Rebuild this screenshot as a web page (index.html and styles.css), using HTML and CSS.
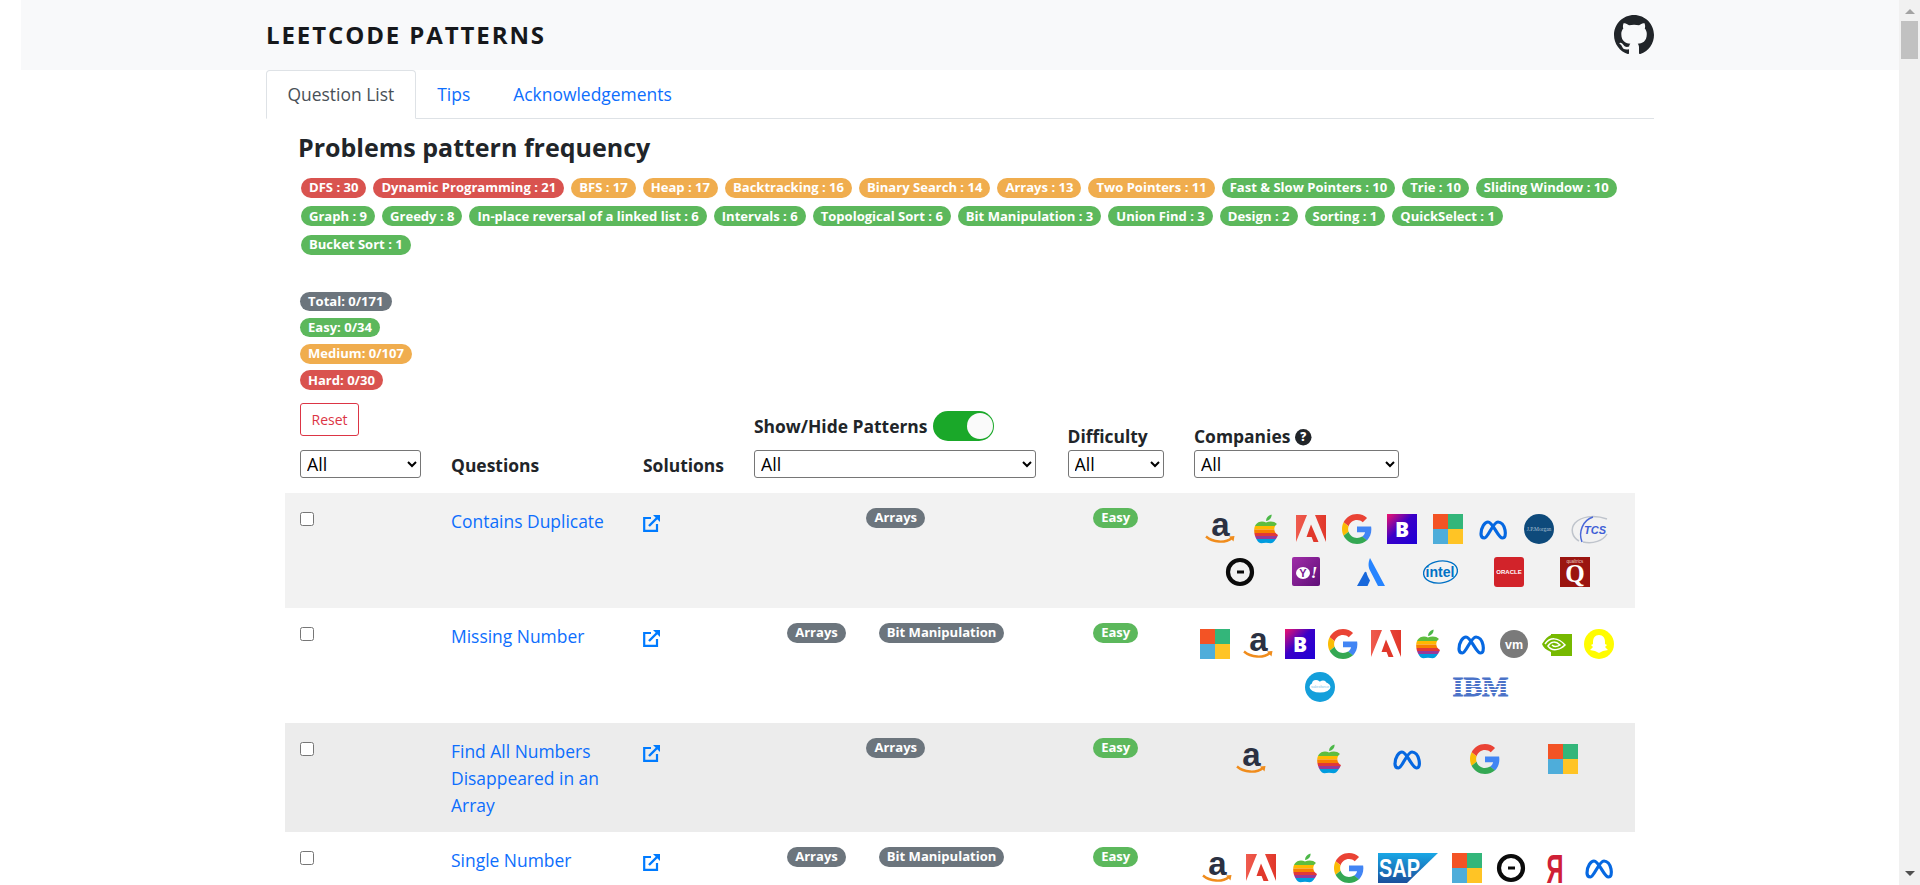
FILE: index.html
```html
<!DOCTYPE html>
<html lang="en">
<head>
<meta charset="utf-8">
<title>Leetcode Patterns</title>
<link rel="stylesheet" href="styles.css">
</head>
<body>
<svg class="sprite" aria-hidden="true">
  <defs>
    <linearGradient id="bookingGrad" x1="0" y1="0" x2="1" y2="1"><stop offset="0" stop-color="#f0146c"/><stop offset=".45" stop-color="#3a00c8"/><stop offset="1" stop-color="#1f00d6"/></linearGradient>
    <linearGradient id="adobeGrad" x1="0" y1="0" x2="1" y2="0"><stop offset="0" stop-color="#ef5b4e"/><stop offset="1" stop-color="#e1382b"/></linearGradient>
    <linearGradient id="sapGrad" x1="0" y1="0" x2="0" y2="1"><stop offset="0" stop-color="#19a8e6"/><stop offset="1" stop-color="#1b4f9c"/></linearGradient>
    <linearGradient id="yahooGrad" x1="0" y1="0" x2="1" y2="1"><stop offset="0" stop-color="#a02ca8"/><stop offset="1" stop-color="#5f0f78"/></linearGradient>
    <clipPath id="appleClip"><path d="M15 8.5C12 6.800 7 7 4.500 11 1.500 16 4 25 8 28.500 10 30 12 28.800 15 28.800 18 28.800 20 30 22 28.500 24.500 26 26 23.500 27 21 22.500 19 22 12.500 26 10 23.500 7 18.500 6.800 15 8.500Z"/></clipPath>
  </defs>
  <symbol id="github" viewBox="0 0 24 24"><path fill="#212529" d="M12 0C5.37 0 0 5.37 0 12c0 5.31 3.435 9.795 8.205 11.385.6.105.825-.255.825-.57 0-.285-.015-1.23-.015-2.235-3.015.555-3.795-.735-4.035-1.41-.135-.345-.72-1.41-1.23-1.695-.42-.225-1.02-.78-.015-.795.945-.015 1.62.87 1.845 1.23 1.08 1.815 2.805 1.305 3.495.99.105-.78.42-1.305.765-1.605-2.67-.3-5.46-1.335-5.46-5.925 0-1.305.465-2.385 1.23-3.225-.12-.3-.54-1.53.12-3.18 0 0 1.005-.315 3.3 1.23.96-.27 1.98-.405 3-.405s2.04.135 3 .405c2.295-1.56 3.3-1.23 3.3-1.23.66 1.65.24 2.88.12 3.18.765.84 1.23 1.905 1.23 3.225 0 4.605-2.805 5.625-5.475 5.925.435.375.81 1.095.81 2.22 0 1.605-.015 2.895-.015 3.3 0 .315.225.69.825.57A12.02 12.02 0 0 0 24 12c0-6.63-5.37-12-12-12z"/></symbol>
  <symbol id="ext" viewBox="0 0 17 17"><path fill="none" stroke="#007bff" stroke-width="2.200" d="M8 3H1.200V15.800H14V9"/><path fill="none" stroke="#007bff" stroke-width="2.400" d="M6 11L14.500 2.500"/><path fill="#007bff" d="M10 0H17V7Z"/></symbol>
  <symbol id="apple" viewBox="0 0 30 30"><path d="M15 7C15 4 17 1.500 20.500 .5 21 3.500 18.500 6.500 15 7Z" fill="#4cb848"/><g clip-path="url(#appleClip)"><rect y="6" width="30" height="6" fill="#5ebd3e"/><rect y="12" width="30" height="3.500" fill="#ffb900"/><rect y="15.500" width="30" height="3.500" fill="#f78200"/><rect y="19" width="30" height="3" fill="#e23838"/><rect y="22" width="30" height="3" fill="#973999"/><rect y="25" width="30" height="5" fill="#009cdf"/></g></symbol>
  <symbol id="adobe" viewBox="0 0 30 30"><path d="M0 1H11L0 28ZM19 1H30V28Z" fill="url(#adobeGrad)"/><path d="M15 10.500L22.500 28H17.500L15.600 23H10.500Z" fill="#e1382b"/></symbol>
  <symbol id="google" viewBox="0 0 48 48"><path fill="#EA4335" d="M24 9.5c3.54 0 6.71 1.22 9.21 3.6l6.85-6.85C35.9 2.38 30.47 0 24 0 14.62 0 6.51 5.38 2.56 13.22l7.98 6.19C12.43 13.72 17.74 9.5 24 9.5z"/><path fill="#4285F4" d="M46.98 24.55c0-1.57-.15-3.09-.38-4.55H24v9.02h12.94c-.58 2.96-2.26 5.48-4.78 7.18l7.73 6c4.51-4.18 7.09-10.36 7.09-17.65z"/><path fill="#FBBC05" d="M10.53 28.59c-.48-1.45-.76-2.99-.76-4.59s.27-3.14.76-4.59l-7.98-6.19C.92 16.46 0 20.12 0 24c0 3.88.92 7.54 2.56 10.78l7.97-6.19z"/><path fill="#34A853" d="M24 48c6.48 0 11.93-2.13 15.89-5.81l-7.73-6c-2.15 1.45-4.92 2.3-8.16 2.3-6.26 0-11.57-4.22-13.47-9.91l-7.98 6.19C6.51 42.62 14.62 48 24 48z"/></symbol>
  <symbol id="microsoft" viewBox="0 0 30 30"><rect width="15" height="15" fill="#f35325"/><rect x="15" width="15" height="15" fill="#33b67a"/><rect y="15" width="15" height="15" fill="#4eadda"/><rect x="15" y="15" width="15" height="15" fill="#ffc425"/></symbol>
  <symbol id="meta" viewBox="0 0 30 30"><path d="M3 20C3 13 7 8 10 8 15 8 20 24 24.500 24 27 24 28 21 27 16 26 11 23 8 20 8 15 8 10 24 6.500 24 4.500 24 3 22.500 3 20Z" fill="none" stroke="#0668e1" stroke-width="3.200"/></symbol>
  <symbol id="uber" viewBox="0 0 30 30"><circle cx="15" cy="15" r="12" fill="none" stroke="#0b0b0b" stroke-width="4.200"/><rect x="12" y="13.500" width="7" height="3" fill="#0b0b0b"/></symbol>
  <symbol id="atlassian" viewBox="0 0 30 30"><path d="M14 1C12 6 12 10 14.500 14.500L22 29H29Z" fill="#2684ff"/><path d="M8.500 15.500L1 29H11.500L14 23.500C12.500 21 11 18 10.500 15.500 10 14.500 9 14.500 8.500 15.500Z" fill="#1868db"/></symbol>
  <symbol id="nvidia" viewBox="0 0 30 30"><path d="M9 5H30V27H9V23C4 21 1 18 0 15 3 10 6 7 9 6Z" fill="#76b900"/><path d="M3 15C8 8 16 8 23 16 18 21 10 23 6 17 9 12 14 12 18 16 15 18 12 18 10 16" fill="none" stroke="#fff" stroke-width="1.500"/></symbol>
  <symbol id="snapchat" viewBox="0 0 30 30"><ellipse cx="15" cy="15" rx="15" ry="15" fill="#fffc00"/><path d="M15 6C19 6 21 9 21 13V15L23 16 21 18 24 21 19 22 15 24 11 22 6 21 9 18 7 16 9 15V13C9 9 11 6 15 6Z" fill="#fff"/></symbol>
</svg>

<nav class="navbar">
  <span class="brand">LEETCODE PATTERNS</span>
  <svg class="github"><use href="#github"/></svg>
</nav>

<main class="page">
  <ul class="tabs">
    <li class="tab active">Question List</li>
    <li class="tab">Tips</li>
    <li class="tab">Acknowledgements</li>
  </ul>

  <section class="summary">
    <h2 class="title">Problems pattern frequency</h2>
    <div class="freq">
      <span class="badge red">DFS : 30</span>
      <span class="badge red">Dynamic Programming : 21</span>
      <span class="badge orange">BFS : 17</span>
      <span class="badge orange">Heap : 17</span>
      <span class="badge orange">Backtracking : 16</span>
      <span class="badge orange">Binary Search : 14</span>
      <span class="badge orange">Arrays : 13</span>
      <span class="badge orange">Two Pointers : 11</span>
      <span class="badge green">Fast &amp; Slow Pointers : 10</span>
      <span class="badge green">Trie : 10</span>
      <span class="badge green">Sliding Window : 10</span>
      <span class="badge green">Graph : 9</span>
      <span class="badge green">Greedy : 8</span>
      <span class="badge green">In-place reversal of a linked list : 6</span>
      <span class="badge green">Intervals : 6</span>
      <span class="badge green">Topological Sort : 6</span>
      <span class="badge green">Bit Manipulation : 3</span>
      <span class="badge green">Union Find : 3</span>
      <span class="badge green">Design : 2</span>
      <span class="badge green">Sorting : 1</span>
      <span class="badge green">QuickSelect : 1</span>
      <span class="badge green">Bucket Sort : 1</span>
    </div>
    <div class="stats">
      <span class="badge grey">Total: 0/171</span>
      <span class="badge green">Easy: 0/34</span>
      <span class="badge orange">Medium: 0/107</span>
      <span class="badge red">Hard: 0/30</span>
    </div>
  </section>

  <table class="problems">
    <colgroup>
      <col class="c-check"><col class="c-question"><col class="c-solution"><col class="c-pattern"><col class="c-difficulty"><col class="c-company">
    </colgroup>
    <thead>
      <tr>
        <th>
          <button class="reset" type="button">Reset</button>
          <select class="filter w-check"><option>All</option></select>
        </th>
        <th class="plain">Questions</th>
        <th class="plain">Solutions</th>
        <th>
          <div class="label-row">Show/Hide Patterns <span class="toggle"><span class="knob"></span></span></div>
          <select class="filter w-pattern"><option>All</option></select>
        </th>
        <th>
          <div class="label-line">Difficulty</div>
          <select class="filter w-difficulty"><option>All</option></select>
        </th>
        <th>
          <div class="label-line">Companies
            <svg class="help" viewBox="0 0 16 16"><circle cx="8" cy="8" r="8" fill="#212529"/><text x="8" y="12" text-anchor="middle" font-family="Open Sans" font-weight="800" font-size="11.500" fill="#fff">?</text></svg>
          </div>
          <select class="filter w-company"><option>All</option></select>
        </th>
      </tr>
    </thead>
    <tbody>
      <tr class="stripe">
        <td class="check"><input type="checkbox"></td>
        <td class="question"><a href="#">Contains Duplicate</a></td>
        <td class="solution"><svg class="ext"><use href="#ext"/></svg></td>
        <td class="tags"><div class="tag-row"><span class="badge grey">Arrays</span></div></td>
        <td class="tags"><div class="tag-row"><span class="badge green">Easy</span></div></td>
        <td class="logos">
          <div class="line line-1a">
            <svg class="logo" viewBox="0 0 30 30"><text x="15.500" y="22" text-anchor="middle" font-family="Liberation Sans" font-weight="700" font-size="33" fill="#2b3142">a</text><path d="M1 22.500C8 28.500 20 29.500 27 24" fill="none" stroke="#f08c1c" stroke-width="2.400"/><path d="M24 22.500L29.500 22 28.500 27.500Z" fill="#f08c1c"/></svg>
            <svg class="logo"><use href="#apple"/></svg>
            <svg class="logo"><use href="#adobe"/></svg>
            <svg class="logo"><use href="#google"/></svg>
            <svg class="logo" viewBox="0 0 30 30"><rect width="30" height="30" fill="url(#bookingGrad)"/><text x="15" y="23" text-anchor="middle" font-family="Open Sans" font-weight="800" font-size="21" fill="#fff">B</text></svg>
            <svg class="logo"><use href="#microsoft"/></svg>
            <svg class="logo"><use href="#meta"/></svg>
            <svg class="logo" viewBox="0 0 30 30"><circle cx="15" cy="15" r="15" fill="#0e4a7b"/><text x="15" y="17" text-anchor="middle" font-family="Liberation Serif" font-size="5.500" fill="#a9c0d4">J.P.Morgan</text></svg>
            <svg class="logo w40" viewBox="0 0 40 30"><path d="M10 27C3 23 1 15 6 9 12 3 24 0 38 5" fill="none" stroke="#bfc4cc" stroke-width="1.500"/><path d="M13 28C9 18 14 6 24 3" fill="none" stroke="#4a68d8" stroke-width="1.500"/><path d="M14 28C24 30 34 27 38 20" fill="none" stroke="#bfc4cc" stroke-width="1.500"/><text x="26" y="20" text-anchor="middle" font-family="Liberation Sans" font-weight="700" font-style="italic" font-size="11" fill="#3f5fd6">TCS</text></svg>
          </div>
          <div class="line line-1b">
            <svg class="logo"><use href="#uber"/></svg>
            <svg class="logo" viewBox="0 0 30 30"><rect x="1" width="28" height="29" rx="2" fill="url(#yahooGrad)"/><ellipse cx="12" cy="16" rx="7" ry="6" fill="#fff"/><text x="12" y="20" text-anchor="middle" font-family="Liberation Sans" font-weight="700" font-size="11" fill="#7b1a92">Y</text><text x="23" y="21" text-anchor="middle" font-family="Liberation Serif" font-style="italic" font-weight="700" font-size="17" fill="#fff">!</text></svg>
            <svg class="logo"><use href="#atlassian"/></svg>
            <svg class="logo w37" viewBox="0 0 37 30"><ellipse cx="18.500" cy="15" rx="17" ry="11" fill="none" stroke="#0071c5" stroke-width="1.400" transform="rotate(-8 18.500 15)"/><text x="18" y="20" text-anchor="middle" font-family="Liberation Sans" font-weight="700" font-size="14" fill="#0071c5">intel</text></svg>
            <svg class="logo" viewBox="0 0 30 30"><rect width="30" height="30" rx="3" fill="#d2232a"/><text x="15" y="17" text-anchor="middle" font-family="Liberation Sans" font-weight="700" font-size="6" fill="#fff">ORACLE</text></svg>
            <svg class="logo" viewBox="0 0 30 30"><rect width="30" height="30" fill="#9b1510"/><text x="15" y="5.500" text-anchor="middle" font-family="Liberation Sans" font-size="4.500" fill="#e6c4c2">qualtrics</text><text x="15" y="25" text-anchor="middle" font-family="Liberation Serif" font-weight="700" font-size="25" fill="#fff">Q</text></svg>
          </div>
        </td>
      </tr>
      <tr>
        <td class="check"><input type="checkbox"></td>
        <td class="question"><a href="#">Missing Number</a></td>
        <td class="solution"><svg class="ext"><use href="#ext"/></svg></td>
        <td class="tags"><div class="tag-row"><span class="badge grey">Arrays</span><span class="badge grey">Bit Manipulation</span></div></td>
        <td class="tags"><div class="tag-row"><span class="badge green">Easy</span></div></td>
        <td class="logos">
          <div class="line line-2a">
            <svg class="logo"><use href="#microsoft"/></svg>
            <svg class="logo" viewBox="0 0 30 30"><text x="15.500" y="22" text-anchor="middle" font-family="Liberation Sans" font-weight="700" font-size="33" fill="#2b3142">a</text><path d="M1 22.500C8 28.500 20 29.500 27 24" fill="none" stroke="#f08c1c" stroke-width="2.400"/><path d="M24 22.500L29.500 22 28.500 27.500Z" fill="#f08c1c"/></svg>
            <svg class="logo" viewBox="0 0 30 30"><rect width="30" height="30" fill="url(#bookingGrad)"/><text x="15" y="23" text-anchor="middle" font-family="Open Sans" font-weight="800" font-size="21" fill="#fff">B</text></svg>
            <svg class="logo"><use href="#google"/></svg>
            <svg class="logo"><use href="#adobe"/></svg>
            <svg class="logo"><use href="#apple"/></svg>
            <svg class="logo"><use href="#meta"/></svg>
            <svg class="logo" viewBox="0 0 30 30"><circle cx="15" cy="15" r="14" fill="#7a7a7a"/><text x="15" y="19.500" text-anchor="middle" font-family="Liberation Sans" font-weight="700" font-size="12.500" fill="#fff">vm</text></svg>
            <svg class="logo"><use href="#nvidia"/></svg>
            <svg class="logo"><use href="#snapchat"/></svg>
          </div>
          <div class="line line-2b">
            <svg class="logo" viewBox="0 0 30 30"><circle cx="15" cy="15" r="15" fill="#149fdb"/><ellipse cx="15" cy="15" rx="10.500" ry="5.500" fill="#fff"/><circle cx="11" cy="12" r="4" fill="#fff"/><circle cx="18" cy="12" r="3.500" fill="#fff"/><text x="15" y="16" text-anchor="middle" font-family="Liberation Sans" font-size="4" fill="#7cc5ea">salesforce</text></svg>
            <svg class="logo w57" viewBox="0 0 57 30"><text x="28.500" y="24" text-anchor="middle" font-family="Liberation Serif" font-weight="700" font-size="27" textLength="56" lengthAdjust="spacingAndGlyphs" fill="#4a72c8" stroke="#4a72c8" stroke-width=".8">IBM</text><g fill="#fff"><rect y="8" width="57" height="1"/><rect y="11" width="57" height="1"/><rect y="14" width="57" height="1"/><rect y="17" width="57" height="1"/><rect y="20" width="57" height="1"/></g></svg>
          </div>
        </td>
      </tr>
      <tr class="stripe-dark">
        <td class="check"><input type="checkbox"></td>
        <td class="question"><a href="#">Find All Numbers Disappeared in an Array</a></td>
        <td class="solution"><svg class="ext"><use href="#ext"/></svg></td>
        <td class="tags"><div class="tag-row"><span class="badge grey">Arrays</span></div></td>
        <td class="tags"><div class="tag-row"><span class="badge green">Easy</span></div></td>
        <td class="logos">
          <div class="line line-3a">
            <svg class="logo" viewBox="0 0 30 30"><text x="15.500" y="22" text-anchor="middle" font-family="Liberation Sans" font-weight="700" font-size="33" fill="#2b3142">a</text><path d="M1 22.500C8 28.500 20 29.500 27 24" fill="none" stroke="#f08c1c" stroke-width="2.400"/><path d="M24 22.500L29.500 22 28.500 27.500Z" fill="#f08c1c"/></svg>
            <svg class="logo"><use href="#apple"/></svg>
            <svg class="logo"><use href="#meta"/></svg>
            <svg class="logo"><use href="#google"/></svg>
            <svg class="logo"><use href="#microsoft"/></svg>
          </div>
        </td>
      </tr>
      <tr>
        <td class="check"><input type="checkbox"></td>
        <td class="question"><a href="#">Single Number</a></td>
        <td class="solution"><svg class="ext"><use href="#ext"/></svg></td>
        <td class="tags"><div class="tag-row"><span class="badge grey">Arrays</span><span class="badge grey">Bit Manipulation</span></div></td>
        <td class="tags"><div class="tag-row"><span class="badge green">Easy</span></div></td>
        <td class="logos">
          <div class="line line-4a">
            <svg class="logo" viewBox="0 0 30 30"><text x="15.500" y="22" text-anchor="middle" font-family="Liberation Sans" font-weight="700" font-size="33" fill="#2b3142">a</text><path d="M1 22.500C8 28.500 20 29.500 27 24" fill="none" stroke="#f08c1c" stroke-width="2.400"/><path d="M24 22.500L29.500 22 28.500 27.500Z" fill="#f08c1c"/></svg>
            <svg class="logo"><use href="#adobe"/></svg>
            <svg class="logo"><use href="#apple"/></svg>
            <svg class="logo"><use href="#google"/></svg>
            <svg class="logo w60" viewBox="0 0 60 30"><path d="M0 0H60L29 30H0Z" fill="url(#sapGrad)"/><text x="21.500" y="24" text-anchor="middle" font-family="Liberation Sans" font-weight="700" font-size="26" textLength="41" lengthAdjust="spacingAndGlyphs" fill="#fff">SAP</text></svg>
            <svg class="logo"><use href="#microsoft"/></svg>
            <svg class="logo"><use href="#uber"/></svg>
            <svg class="logo" viewBox="0 0 30 30"><text x="15" y="29.500" text-anchor="middle" font-family="Liberation Sans" font-weight="700" font-size="41" textLength="17" lengthAdjust="spacingAndGlyphs" fill="#cf2036">Я</text></svg>
            <svg class="logo"><use href="#meta"/></svg>
          </div>
        </td>
      </tr>
    </tbody>
  </table>
</main>

<div class="scrollbar" aria-hidden="true">
  <span class="arrow-up"></span>
  <span class="thumb"></span>
  <span class="arrow-down"></span>
</div>
</body>
</html>
```
FILE: styles.css
```css
* { box-sizing: border-box; }

html, body { height: 100%; }

body {
  margin: 0;
  overflow: hidden;
  background: #fff;
  color: #212529;
  font-family: "Open Sans", sans-serif;
  font-size: 17.45px;
  line-height: 26.67px;
}

.sprite { display: block; width: 0; height: 0; }

.navbar {
  display: flex;
  justify-content: space-between;
  align-items: center;
  height: 70px;
  margin: 0 21px;
  padding: 0 245px;
  background: #f8f9fa;
}

.brand {
  font-size: 24px;
  font-weight: 700;
  letter-spacing: 1.9px;
  color: #16181b;
}

.github { display: block; width: 40px; height: 40px; }

.page { width: 1388px; margin: 0 auto; }

.tabs {
  display: flex;
  height: 49px;
  margin: 0;
  padding: 0;
  list-style: none;
  border-bottom: 1px solid #dee2e6;
}

.tab {
  height: 49px;
  padding: 10px 20.5px;
  color: #0d6efd;
  border: 1px solid transparent;
}

.tab.active {
  color: #495057;
  background: #fff;
  border-color: #dee2e6 #dee2e6 #fff;
  border-radius: 4px 4px 0 0;
}

.summary { padding: 0 34px; }

.title {
  height: 59px;
  margin: 0 0 0 -2px;
  padding-top: 11px;
  font-size: 25px;
  line-height: 34px;
  font-weight: 700;
}

.freq {
  display: flex;
  flex-wrap: wrap;
  gap: 8.9px 7px;
  width: 1317px;
  margin-left: 1px;
}

.stats {
  display: flex;
  flex-direction: column;
  align-items: flex-start;
  gap: 6.7px;
  margin-top: 37px;
}

.badge {
  display: inline-block;
  height: 19.6px;
  padding: 3.1px 8px;
  font-size: 13.05px;
  line-height: 13.33px;
  font-weight: 700;
  color: #fff;
  white-space: nowrap;
  border-radius: 10px;
}

.red { background: #d9534f; }
.orange { background: #f0ad4e; }
.green { background: #5cb85c; }
.grey { background: #6c757d; }

.problems {
  table-layout: fixed;
  width: 1350px;
  margin: 13px 0 0 19px;
  border-collapse: collapse;
}

.c-check { width: 151px; }
.c-question { width: 192px; }
.c-solution { width: 111px; }
.c-pattern { width: 313.5px; }
.c-difficulty { width: 126.5px; }
.c-company { width: 456px; }

.problems th {
  padding: 0 0 15px 15px;
  font-weight: 700;
  text-align: left;
  vertical-align: bottom;
}

.problems th.plain { padding-bottom: 14px; }

.reset {
  display: block;
  width: 59px;
  height: 33px;
  margin-bottom: 14px;
  padding: 0;
  font: 400 14px "Open Sans", sans-serif;
  color: #dc3545;
  background: #fff;
  border: 1px solid #dc3545;
  border-radius: 3px;
}

.filter {
  display: block;
  height: 28px;
  padding: 0 0 0 2px;
  font: 400 17.78px "Open Sans", sans-serif;
  color: #000;
  background: #fff;
  border: 1px solid #767676;
  border-radius: 3px;
}

.w-check { width: 121px; }
.w-pattern { width: 282px; }
.w-difficulty { width: 96px; }
.w-company { width: 205px; }

.label-row {
  display: flex;
  align-items: center;
  gap: 5px;
  height: 30px;
  margin-bottom: 9px;
  white-space: nowrap;
}

.label-line { display: flex; align-items: center; gap: 5px; white-space: nowrap; }

.toggle {
  display: flex;
  justify-content: flex-end;
  align-items: center;
  width: 61px;
  height: 30px;
  padding: 0 1px;
  background: #1aa829;
  border-radius: 15px;
}

.knob {
  display: block;
  width: 26px;
  height: 26px;
  background: #fafafa;
  border-radius: 50%;
}

.help { display: block; width: 16.5px; height: 16.5px; margin-top: 2px; }

.problems td { vertical-align: top; }

.stripe { background: #f2f2f2; }
.stripe-dark { background: #ececec; }

.check { padding: 19px 0 0 15px; }
.check input { display: block; width: 14.4px; height: 14.4px; margin: 0; }

.question { padding: 15.3px 15px 13.7px; }
.question a { color: #0d6efd; text-decoration: none; }

.solution { padding: 22px 0 0 15px; }
.ext { display: block; width: 17px; height: 17px; }

.tags { padding: 15px 0 0; }

.tag-row {
  display: flex;
  justify-content: center;
  gap: 33px;
}

.logos { padding: 21px 0; }

.line { display: flex; }
.line + .line { margin-top: 13px; }

.logo { display: block; flex: none; width: 30px; height: 30px; overflow: visible; }
.w37 { width: 37px; }
.w40 { width: 40px; }
.w57 { width: 57px; }
.w60 { width: 60px; }

.line-1a { padding-left: 26px; gap: 15.5px; }
.line-1b { padding-left: 46px; gap: 35.6px; }
.line-2a { padding-left: 21px; gap: 12.7px; }
.line-2b { padding-left: 126px; gap: 117px; }
.line-3a { padding-left: 57px; gap: 48px; }
.line-4a { padding-left: 23px; gap: 14px; }

.scrollbar {
  position: fixed;
  top: 0;
  right: 0;
  bottom: 0;
  display: flex;
  flex-direction: column;
  align-items: center;
  width: 21px;
  background: #f1f1f1;
}

.arrow-up {
  margin-top: 9px;
  border: solid transparent;
  border-width: 0 5px 5px;
  border-bottom-color: #a3a3a3;
}

.thumb {
  width: 17px;
  height: 38px;
  margin-top: 7px;
  background: #c1c1c1;
}

.arrow-down {
  margin-top: auto;
  margin-bottom: 9px;
  border: solid transparent;
  border-width: 5px 5px 0;
  border-top-color: #505050;
}
```
